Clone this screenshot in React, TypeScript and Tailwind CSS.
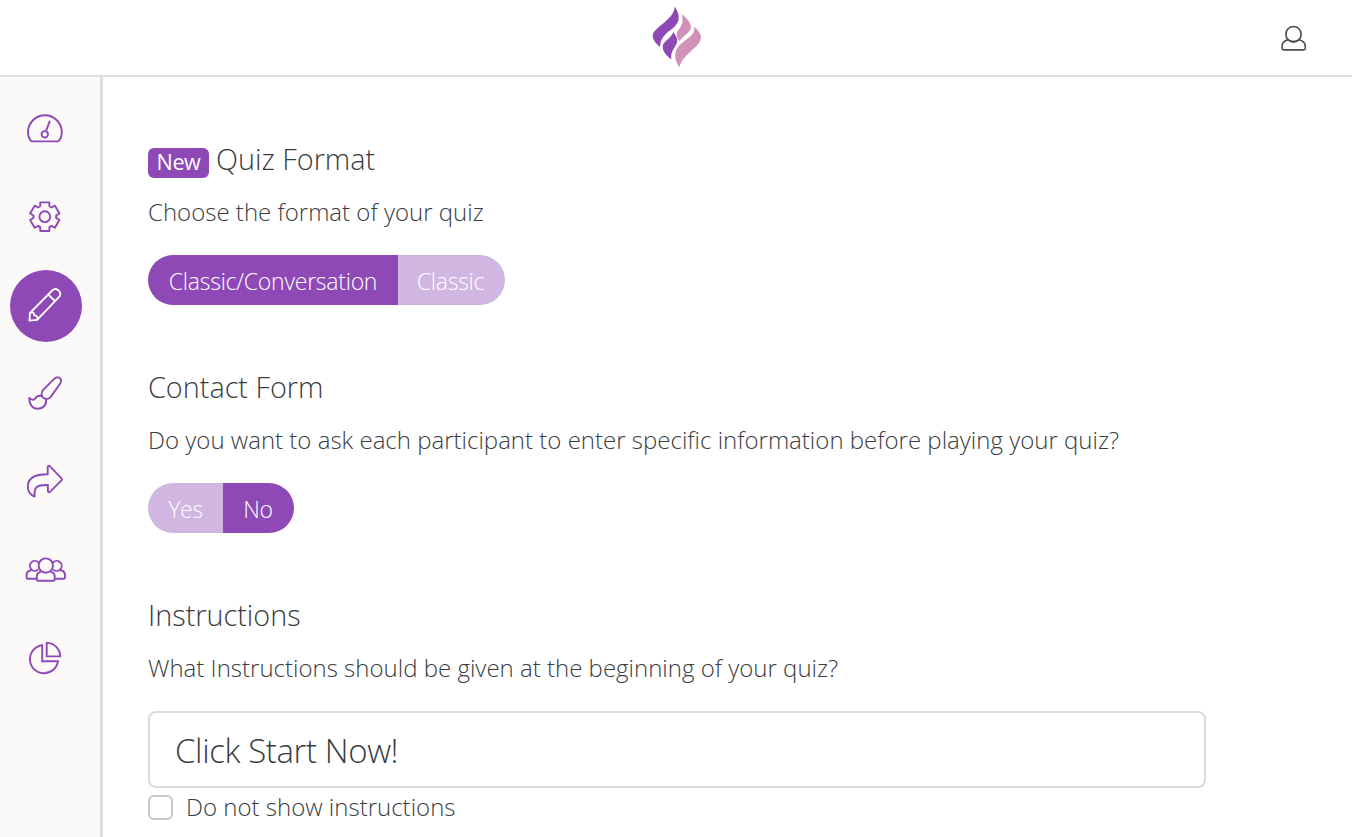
import type { ReactNode } from "react";

const GEAR_POINTS = Array.from({ length: 6 }, (_, i) =>
  [
    [-24, 11.4],
    [-17.5, 15],
    [17.5, 15],
    [24, 11.4],
  ].map(([deg, r]) => {
    const a = ((i * 60 + deg - 90) * Math.PI) / 180;
    return `${(20.8 + r * Math.cos(a)).toFixed(2)},${(21.7 + r * Math.sin(a)).toFixed(2)}`;
  })
)
  .flat()
  .join(" ");

type NavItemProps = {
  label: string;
  active?: boolean;
  children: ReactNode;
};

function NavItem({ label, active, children }: NavItemProps) {
  return (
    <a aria-label={label} className="flex h-[88px] w-[92px] items-center justify-center">
      <span
        className={
          active
            ? "mt-0.5 flex size-[72px] items-center justify-center rounded-full bg-[#8e49b6] text-white"
            : "flex size-[72px] items-center justify-center text-[#8e49b6]"
        }
      >
        <svg
          viewBox="0 0 44 44"
          className={active ? "mb-0.5 size-11" : "size-11"}
          fill="none"
          stroke="currentColor"
          strokeWidth="1.9"
          strokeLinejoin="round"
          strokeLinecap="round"
        >
          {children}
        </svg>
      </span>
    </a>
  );
}

function Sidebar() {
  return (
    <nav className="w-[103px] shrink-0 border-r-3 border-[#dcddde] bg-[#fbfaf8] pt-2">
      <NavItem label="Dashboard">
        <path d="M7.6 34.4C5.2 32.2 4 28.9 4 25.2a16.9 16.9 0 0 1 33.8 0c0 3.7-1.2 7-3.6 9.2Z" />
        <circle cx="20.8" cy="27.3" r="3.2" />
        <path d="M22 24.1 25.7 14.4" />
      </NavItem>
      <NavItem label="Settings">
        <polygon points={GEAR_POINTS} />
        <circle cx="20.8" cy="21.7" r="5.4" />
      </NavItem>
      <NavItem label="Edit" active>
        <path d="M5.5 37.6 6 29.8 28.2 7.5c2-2 4.6-1.8 6.5.1 2 1.9 2.2 4.6.2 6.6L13.1 36.9Z" />
        <path d="M24.3 11.6 31.2 18.2M6.6 29.4c2.200-.5 3.800.6 3.600 3 2.300-.2 3.600 1.300 3.300 3.900" />
      </NavItem>
      <NavItem label="Design">
        <path d="M36.1 7.4c-1.6-1.6-3.9-1.3-5.7.3L19.2 18.9c-1.7 1.7-1.9 5-.8 7.2 2.2 2.3 5.8 2.5 8 .3L35.9 13c1.3-2 1.5-4.2.2-5.6Z" />
        <path d="M18 25c-3.3-.6-5.4.3-6.7 2.4-1.2 1.8-3.4 2-6-.5-.2 6.7 3.3 10.8 8.7 10.8 5 0 8.6-3.6 8-8.8" />
      </NavItem>
      <NavItem label="Share">
        <path d="M10.5 37.6C5.8 35.6 3.8 31.9 3.8 27.5c0-8.8 6.8-12.2 19.9-12.2V8.2c0-1.3 1.4-1.8 2.3-.9l11.5 12c.7.7.7 1.3 0 2L26 32.8c-.9.9-2.1.5-2.1-.8v-6c-11.2-.2-13.9 1.8-13.4 11.6Z" />
      </NavItem>
      <NavItem label="Contacts">
        <circle cx="21.8" cy="18.6" r="7.2" />
        <path d="M16.3 24.8c-2.4.8-3.5 2.4-3.5 4.5v3.2c0 .8.5 1.3 1.3 1.3h15.3c.8 0 1.3-.5 1.3-1.3v-3.2c0-2.1-1.1-3.7-3.5-4.5" />
        <path d="M14.7 15.7a5 5 0 1 0-1 7.3M28.9 15.7a5 5 0 1 1 1 7.3" />
        <path d="M7 23.2c-3 .6-4.4 2.3-4.4 4.7v2.5c0 .8.5 1.3 1.3 1.3h8.3M36.6 23.2c3 .6 4.4 2.3 4.4 4.7v2.5c0 .8-.5 1.3-1.3 1.3h-8.3" />
      </NavItem>
      <NavItem label="Reports">
        <path strokeLinejoin="miter" d="M18.2 10.2A14.1 14.1 0 1 0 34 26.2H18.2Z" />
        <path strokeLinejoin="miter" d="M22.7 7.9C30.5 8 36 13.8 36.2 21.4H22.7Z" />
      </NavItem>
    </nav>
  );
}

function Header() {
  return (
    <header className="grid h-[77px] grid-cols-3 items-center border-b-2 border-[#dfe0e1]">
      <span />
      <svg viewBox="3 0 270 225" className="h-[75px] w-[90px] justify-self-center">
        <g fill="#8e49b6">
          <path d="M134 20C152 45 151 67 127 86C104 101 91 117 90 141C77 130 67 118 68 106C74 78 131 61 134 20Z" />
          <path d="M130 97C144 114 145 126 135 140C125 153 122 165 124 178C108 166 98 153 98 140C98 125 122 117 130 97Z" />
        </g>
        <g fill="#d291b9">
          <path d="M155 42C166 50 183 68 183 81C183 96 160 107 148 124C136 105 139 97 149 85C158 73 160 60 155 42Z" />
          <path d="M193 80C203 89 214 102 213 112C211 143 160 159 148 202C136 182 129 161 145 140C164 117 196 109 193 80Z" />
        </g>
      </svg>
      <svg
        viewBox="54 37.5 90 90"
        className="mr-11 size-[30px] justify-self-end"
        fill="none"
        stroke="#4a4b4d"
        strokeWidth="4.8"
        strokeLinejoin="round"
      >
        <circle cx="100.5" cy="71" r="23" />
        <path d="M84 88C72 91 66 99 66 109V113Q66 118 71 118H131Q136 118 136 113V109C136 99 129 91 117 88Q101 99 84 88Z" />
      </svg>
    </header>
  );
}

type SectionProps = {
  title: string;
  text: string;
  badge?: string;
  children: ReactNode;
};

function Section({ title, text, badge, children }: SectionProps) {
  return (
    <section className="h-[228px]">
      <h2 className="flex h-10 items-center text-[28.8px] whitespace-nowrap">
        {badge && (
          <span className="mt-[7px] mr-[7px] flex h-[30px] w-[61px] items-center justify-center rounded-md bg-[#8e49b6] pb-px text-[21.6px] font-normal tracking-[-0.4px] text-white">
            {badge}
          </span>
        )}
        {title}
      </h2>
      <p className="mt-[15px] h-9 text-[24.03px] leading-9 whitespace-nowrap">{text}</p>
      {children}
    </section>
  );
}

type ToggleProps = {
  options: { label: string; width: string }[];
  selected: number;
};

function Toggle({ options, selected }: ToggleProps) {
  return (
    <div className="mt-[25px] flex h-[50px] w-fit overflow-hidden rounded-full">
      {options.map((option, i) => (
        <button
          key={option.label}
          type="button"
          className={`${option.width} pt-0.5 text-[23px] tracking-[-0.25px] text-white ${i === selected ? "bg-[#8e49b6]" : "bg-[#d1b6e1]"}`}
        >
          {option.label}
        </button>
      ))}
    </div>
  );
}

export default function App() {
  return (
    <div className="flex h-screen flex-col overflow-hidden bg-white font-['Open_Sans',sans-serif] font-light text-[#3a3c3f]">
      <Header />
      <div className="flex min-h-0 flex-1">
        <Sidebar />
        <main className="flex-1 pt-[62px] pl-[45px]">
          <Section
            badge="New"
            title="Quiz Format"
            text="Choose the format of your quiz"
          >
            <Toggle
              options={[
                { label: "Classic/Conversation", width: "w-[250px]" },
                { label: "Classic", width: "w-[107px] pr-0.5" },
              ]}
              selected={0}
            />
          </Section>
          <Section
            title="Contact Form"
            text="Do you want to ask each participant to enter specific information before playing your quiz?"
          >
            <Toggle
              options={[
                { label: "Yes", width: "w-[75px]" },
                { label: "No", width: "w-[71px] pr-px" },
              ]}
              selected={1}
            />
          </Section>
          <Section
            title="Instructions"
            text="What Instructions should be given at the beginning of your quiz?"
          >
            <input
              type="text"
              defaultValue="Click Start Now!"
              className="mt-[25px] block h-[77px] w-[1058px] rounded-lg border-2 border-[#d8dcdf] px-[25px] pt-px text-[33px] tracking-[-0.4px]"
            />
            <label className="flex h-[38px] items-center text-[24.03px]">
              <input
                type="checkbox"
                className="mr-[13px] size-[25px] appearance-none rounded-md border-2 border-[#c3c9cd]"
              />
              Do not show instructions
            </label>
          </Section>
        </main>
      </div>
    </div>
  );
}
